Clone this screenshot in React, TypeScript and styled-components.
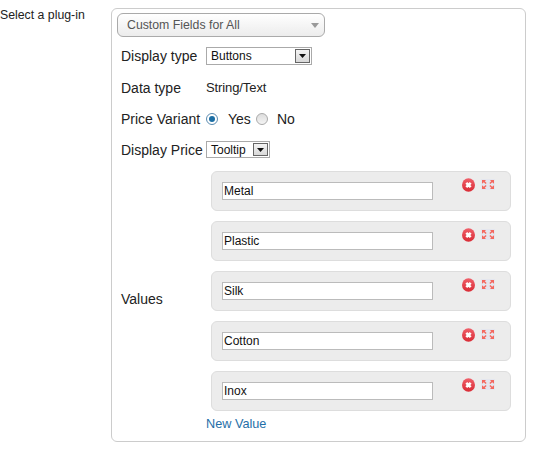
import React from 'react';
import styled, { createGlobalStyle } from 'styled-components';

const GlobalStyle = createGlobalStyle`
  html, body {
    margin: 0;
    background: #fff;
    font-family: "Liberation Sans", Arial, sans-serif;
    color: #222;
  }
`;

const VALUES = ['Metal', 'Plastic', 'Silk', 'Cotton', 'Inox'];

function SelectArrow() {
  return (
    <ArrowBox>
      <svg width="7" height="4" viewBox="0 0 7 4">
        <path d="M0 0h7L3.5 4z" fill="#111" />
      </svg>
    </ArrowBox>
  );
}

function RemoveIcon() {
  return (
    <svg width="13" height="14" viewBox="0 0 13 14">
      <defs>
        <linearGradient id="removeFill" x1="0" y1="0" x2="0" y2="1">
          <stop offset="0" stopColor="#f0606a" />
          <stop offset="1" stopColor="#d92b35" />
        </linearGradient>
      </defs>
      <ellipse cx="6.500" cy="7" rx="6.500" ry="6.800" fill="url(#removeFill)" />
      <path d="M4.300 4.800l4.400 4.400M8.700 4.800L4.300 9.200" stroke="#fff" strokeWidth="2.600" />
    </svg>
  );
}

function MoveIcon() {
  return (
    <svg width="14" height="11" viewBox="0 0 14 11">
      <rect width="14" height="11" fill="#e4e6ee" />
      <path
        d="M1 1h4L3.800 2.200 5.600 4 4.600 5 2.800 3.200 1 4.800zM13 1v3.800L11.200 3.200 9.400 5l-1-1 1.800-1.800L9 1zM1 10V6.200l1.800 1.600L4.600 6l1 1-1.800 1.800L5 10zM13 10H9l1.200-1.200L8.400 7l1-1 1.800 1.800L13 6.200z"
        fill="#f4685f"
      />
    </svg>
  );
}

function Radio({ checked }: { checked?: boolean }) {
  return (
    <RadioDot $checked={checked}>
      {checked && <RadioInner />}
    </RadioDot>
  );
}

export default function App() {
  return (
    <Page>
      <GlobalStyle />
      <PageLabel>Select a plug-in</PageLabel>
      <Panel>
        <PluginDropdown>
          <span>Custom Fields for All</span>
          <DropdownCaret />
        </PluginDropdown>
        <Row $height={33}>
          <RowLabel>Display type</RowLabel>
          <FakeSelect $width={106} $height={18}>
            <span>Buttons</span>
            <SelectArrow />
          </FakeSelect>
        </Row>
        <Row $height={31}>
          <RowLabel>Data type</RowLabel>
          <PlainValue>String/Text</PlainValue>
        </Row>
        <Row $height={31}>
          <RowLabel>Price Variant</RowLabel>
          <Radio checked />
          <RadioText $gap={10} $width={28}>Yes</RadioText>
          <Radio />
          <RadioText $gap={9}>No</RadioText>
        </Row>
        <Row $height={31}>
          <RowLabel>Display Price</RowLabel>
          <FakeSelect $width={64} $height={17}>
            <span>Tooltip</span>
            <SelectArrow />
          </FakeSelect>
        </Row>
        <ValuesRow>
          <ValuesLabel>Values</ValuesLabel>
          <ValuesList>
            {VALUES.map((value) => (
              <ValueCard key={value}>
                <ValueInput readOnly value={value} />
                <CardIcons>
                  <RemoveIcon />
                  <MoveIcon />
                </CardIcons>
              </ValueCard>
            ))}
            <NewValue href="#">New Value</NewValue>
          </ValuesList>
        </ValuesRow>
      </Panel>
    </Page>
  );
}

const Page = styled.div`
  display: flex;
  align-items: flex-start;
  width: 545px;
  height: 450px;
  padding-top: 8px;
  box-sizing: border-box;
`;

const PageLabel = styled.div`
  width: 111px;
  font-size: 12.3px;
  line-height: 14px;
`;

const Panel = styled.div`
  box-sizing: border-box;
  width: 415px;
  height: 434px;
  border: 1px solid #ccc;
  border-radius: 6px;
  padding: 4px 0 0 5px;
`;

const PluginDropdown = styled.div`
  box-sizing: border-box;
  display: flex;
  align-items: center;
  justify-content: space-between;
  width: 208px;
  height: 24px;
  padding: 0 5px 0 9px;
  border: 1px solid #aaa;
  border-radius: 6px;
  background: linear-gradient(#fff, #ececec);
  font-size: 12.3px;
  color: #555;
  margin-bottom: 2px;
`;

const DropdownCaret = styled.div`
  width: 0;
  height: 0;
  border-left: 4px solid transparent;
  border-right: 4px solid transparent;
  border-top: 5px solid #999;
`;

const Row = styled.div<{ $height: number }>`
  display: flex;
  align-items: center;
  height: ${({ $height }) => $height}px;
  padding-left: 4px;
`;

const RowLabel = styled.div`
  flex: none;
  width: 85px;
  font-size: 14px;
  color: #222;
`;

const ValuesLabel = styled(RowLabel)`
  margin-bottom: 4px;
`;

const FakeSelect = styled.div<{ $width: number; $height: number }>`
  box-sizing: border-box;
  display: flex;
  align-items: center;
  justify-content: space-between;
  width: ${({ $width }) => $width}px;
  height: ${({ $height }) => $height}px;
  border: 1px solid #aaa;
  padding: 1px 1px 1px 4px;
  font-size: 12px;
  color: #111;
  background: #fff;
`;

const ArrowBox = styled.div`
  box-sizing: border-box;
  display: flex;
  align-items: center;
  justify-content: center;
  width: 15px;
  height: 100%;
  border: 1px solid #666;
  background: linear-gradient(#f4f4f4, #d8d8d8);
`;

const PlainValue = styled.div`
  font-size: 13px;
  letter-spacing: -0.1px;
  color: #222;
`;

const RadioDot = styled.div<{ $checked?: boolean }>`
  box-sizing: border-box;
  display: flex;
  align-items: center;
  justify-content: center;
  flex: none;
  width: 12px;
  height: 12px;
  border-radius: 50%;
  border: 1px solid ${({ $checked }) => ($checked ? '#5a8bb0' : '#aaa')};
  background: ${({ $checked }) => ($checked ? '#fff' : 'linear-gradient(#ddd, #f4f4f4)')};
`;

const RadioInner = styled.div`
  width: 6px;
  height: 6px;
  border-radius: 50%;
  background: #1c6ea4;
`;

const RadioText = styled.div<{ $gap: number; $width?: number }>`
  margin-left: ${({ $gap }) => $gap}px;
  font-size: 14px;
  color: #222;
  width: ${({ $width }) => ($width ? `${$width}px` : 'auto')};
`;

const ValuesRow = styled.div`
  display: flex;
  align-items: center;
  padding-left: 4px;
  margin-top: 6px;
`;

const ValuesList = styled.div`
  display: flex;
  flex-direction: column;
  gap: 10px;
`;

const ValueCard = styled.div`
  box-sizing: border-box;
  position: relative;
  width: 300px;
  height: 40px;
  margin-left: 5px;
  padding: 10px 0 0 10px;
  border: 1px solid #ddd;
  border-radius: 6px;
  background: #ececec;
`;

const ValueInput = styled.input`
  display: block;
  box-sizing: border-box;
  width: 211px;
  height: 18px;
  padding: 0 1px;
  border: 1px solid #bbb;
  background: #fff;
  font-family: "Liberation Sans", Arial, sans-serif;
  font-size: 12px;
  color: #111;
  outline: none;
`;

const CardIcons = styled.div`
  position: absolute;
  top: 6px;
  left: 250px;
  display: flex;
  align-items: flex-start;
  gap: 6px;

  svg:last-child {
    margin-top: 1px;
  }
`;

const NewValue = styled.a`
  margin-top: -4px;
  font-size: 12.7px;
  color: #1f6fa8;
  text-decoration: none;
`;
